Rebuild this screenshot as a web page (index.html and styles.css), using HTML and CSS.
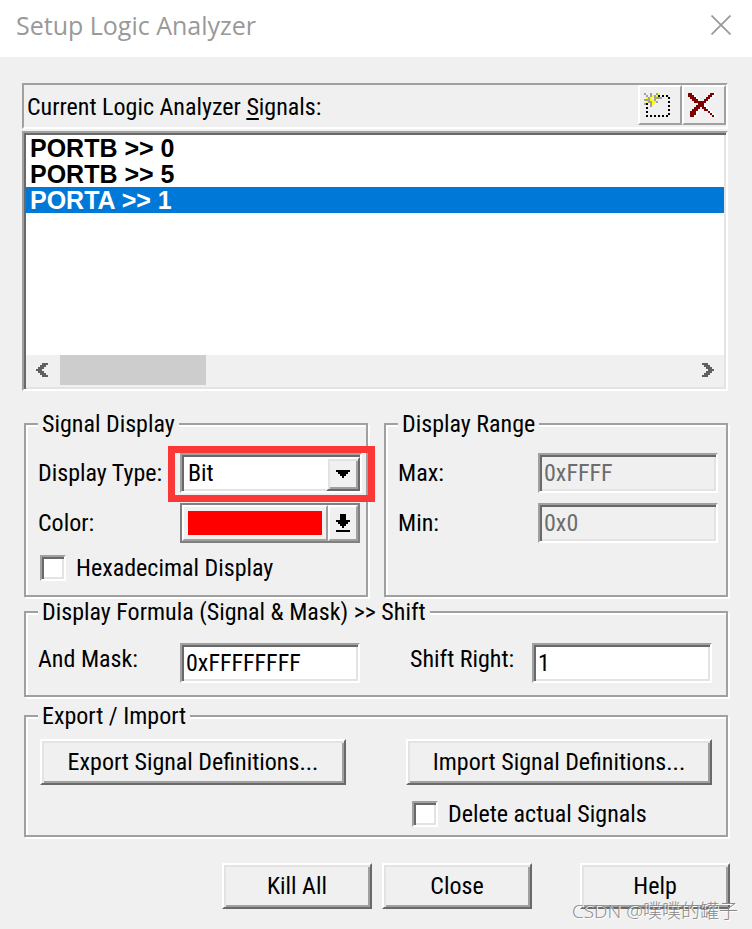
FILE: index.html
```html
<!DOCTYPE html>
<html lang="en">
<head>
<meta charset="utf-8">
<title>Setup Logic Analyzer</title>
<link rel="stylesheet" href="styles.css">
</head>
<body>
<main class="dialog">
  <header class="titlebar">
    <h1 class="title">Setup Logic Analyzer</h1>
    <button class="close" type="button" aria-label="Close window">
      <svg width="20" height="20" viewBox="0 0 20 20" fill="none" stroke="#999" stroke-width="1.7"><path d="M.5 .5 19.5 19.5M19.5 .5 .5 19.5"/></svg>
    </button>
  </header>

  <form class="content">
    <div class="caption">
      <span class="caption-text" id="signals-label">Current Logic Analyzer <u>S</u>ignals:</span>
      <button class="tool" type="button" aria-label="New signal">
        <svg width="26" height="24" viewBox="0 0 13 12" shape-rendering="crispEdges">
          <path fill="#000" d="M7 1h1v1H7zM9 1h1v1H9zM11 1h1v1h-1zM12 2h1v1h-1zM12 4h1v1h-1zM12 6h1v1h-1zM12 8h1v1h-1zM12 10h1v1h-1zM1 5h1v1H1zM1 7h1v1H1zM1 9h1v1H1zM1 11h1v1H1zM3 11h1v1H3zM5 11h1v1H5zM7 11h1v1H7zM9 11h1v1H9zM11 11h1v1h-1z"/>
          <path fill="#a0a0a0" d="M0 0h1v1H0zM3 0h1v2H3zM6 0h1v1H6zM1 1h1v1H1zM5 1h1v1H5zM2 2h1v1H2zM5 2h4v1H5zM0 3h3v1H0zM2 4h2v1H2zM6 4h1v1H6zM0 5h1v1H0zM3 5h1v2H3zM5 3h1v1H5z"/>
          <path fill="#ff0" d="M7 0h1v1H7zM4 1h1v1H4zM6 1h1v1H6zM1 2h1v1H1zM3 2h1v1H3zM3 3h2v1H3zM1 4h1v1H1zM4 4h2v1H4zM4 5h1v1H4z"/>
        </svg>
      </button>
      <button class="tool" type="button" aria-label="Delete signal">
        <svg width="28" height="26" viewBox="0 0 14 13" shape-rendering="crispEdges">
          <defs><path id="cross" d="M0 0h2v1H0zM11 0h2v1h-2zM0 1h3v1H0zM10 1h2v1h-2zM1 2h3v1H1zM9 2h2v1H9zM2 3h3v1H2zM8 3h2v1H8zM3 4h6v1H3zM5 5h3v1H5zM4 6h4v1H4zM3 7h3v1H3zM7 7h2v1H7zM2 8h3v1H2zM8 8h2v1H8zM1 9h3v1H1zM10 9h1v1h-1zM1 10h3v1H1zM11 10h1v1h-1zM1 11h2v1H1zM12 11h1v1h-1z"/></defs>
          <use href="#cross" x="1" fill="#fff"/>
          <use href="#cross" fill="#800000"/>
        </svg>
      </button>
    </div>

    <div class="signals sunken">
      <ul class="signal-list" role="listbox" aria-labelledby="signals-label">
        <li role="option" aria-selected="false">PORTB &gt;&gt; 0</li>
        <li role="option" aria-selected="false">PORTB &gt;&gt; 5</li>
        <li role="option" aria-selected="true" class="selected">PORTA &gt;&gt; 1</li>
      </ul>
      <div class="scrollbar">
        <button class="scroll-arrow" type="button" aria-label="Scroll left">
          <svg width="12" height="14" viewBox="0 0 6 7" fill="#606060" shape-rendering="crispEdges"><path d="M3 0h3v1H3zM2 1h3v1H2zM1 2h3v1H1zM0 3h3v1H0zM1 4h3v1H1zM2 5h3v1H2zM3 6h3v1H3z"/></svg>
        </button>
        <div class="scroll-track"><div class="scroll-thumb"></div></div>
        <button class="scroll-arrow" type="button" aria-label="Scroll right">
          <svg width="12" height="14" viewBox="0 0 6 7" fill="#606060" shape-rendering="crispEdges"><path d="M0 0h3v1H0zM1 1h3v1H1zM2 2h3v1H2zM3 3h3v1H3zM2 4h3v1H2zM1 5h3v1H1zM0 6h3v1H0z"/></svg>
        </button>
      </div>
    </div>

    <div class="groups">
      <div class="pair">
        <fieldset class="group display">
          <legend>Signal Display</legend>
          <div class="row">
            <label for="type">Display Type:</label>
            <div class="combo field">
              <select id="type" class="sunken"><option>Bit</option></select>
              <span class="combo-arrow raised">
                <svg width="14" height="8" viewBox="0 0 7 4" shape-rendering="crispEdges"><path d="M0 0h7v1H0zM1 1h5v1H1zM2 2h3v1H2zM3 3h1v1H3z"/></svg>
              </span>
              <span class="highlight"></span>
            </div>
          </div>
          <div class="row">
            <label for="color">Color:</label>
            <button id="color" class="color field" type="button">
              <span class="color-face"><span class="swatch"></span></span>
              <span class="color-drop">
                <svg width="14" height="18" viewBox="0 0 7 9" shape-rendering="crispEdges"><path d="M2 0h3v3H2zM0 3h7v1H0zM1 4h5v1H1zM2 5h3v1H2zM3 6h1v1H3zM0 8h7v1H0z"/></svg>
              </span>
            </button>
          </div>
          <label class="check"><input type="checkbox" class="sunken">Hexadecimal Display</label>
        </fieldset>

        <fieldset class="group range">
          <legend>Display Range</legend>
          <div class="row">
            <label for="max">Max:</label>
            <input id="max" class="text field sunken" type="text" value="0xFFFF" disabled>
          </div>
          <div class="row">
            <label for="min">Min:</label>
            <input id="min" class="text field sunken" type="text" value="0x0" disabled>
          </div>
        </fieldset>
      </div>

      <fieldset class="group formula">
        <legend>Display Formula (Signal &amp; Mask) &gt;&gt; Shift</legend>
        <div class="formula-row">
          <div class="row">
            <label for="mask">And Mask:</label>
            <input id="mask" class="text field sunken" type="text" value="0xFFFFFFFF">
          </div>
          <div class="row shift">
            <label for="shift">Shift Right:</label>
            <input id="shift" class="text field sunken" type="text" value="1">
          </div>
        </div>
      </fieldset>

      <fieldset class="group transfer">
        <legend>Export / Import</legend>
        <div class="transfer-grid">
          <button class="push raised" type="button">Export Signal Definitions...</button>
          <button class="push raised" type="button">Import Signal Definitions...</button>
          <label class="check delete"><input type="checkbox" class="sunken">Delete actual Signals</label>
        </div>
      </fieldset>
    </div>

    <footer class="actions">
      <button class="push raised" type="button">Kill All</button>
      <button class="push raised" type="button">Close</button>
      <button class="push raised help" type="button">Help</button>
    </footer>
  </form>
  <div class="watermark">CSDN @噗噗的罐子</div>
</main>
</body>
</html>
```
FILE: styles.css
```css
* {
  box-sizing: border-box;
}

body {
  margin: 0;
  background: #f0f0f0;
  color: #000;
  font: 24px/28px "Roboto Condensed", Roboto, sans-serif;
}

button, input, select {
  margin: 0;
  padding: 0;
  border: 0;
  border-radius: 0;
  background: #f0f0f0;
  color: inherit;
  font: inherit;
}

svg {
  display: block;
}

.dialog {
  position: relative;
  min-height: 100vh;
}

/* Two-step bevels */
.sunken {
  border: 2px solid;
  border-color: #a0a0a0 #fff #fff #a0a0a0;
  box-shadow: inset 2px 2px #696969, inset -2px -2px #e3e3e3;
}

.raised {
  border: 2px solid;
  border-color: #fff #696969 #696969 #fff;
  box-shadow: inset 2px 2px #e3e3e3, inset -2px -2px #a0a0a0;
}

.titlebar {
  display: flex;
  align-items: center;
  justify-content: space-between;
  height: 57px;
  padding: 0 21px 7px 16px;
  background: #fff;
}

.title {
  margin: 0;
  color: #999;
  font: 25px/34px "Open Sans", sans-serif;
}

.close {
  background: none;
}

.content {
  padding: 26px 24px 20px 22px;
}

/* Signal list */
.caption {
  display: flex;
  height: 46px;
  border: 2px solid;
  border-color: #a0a0a0 #fff #fff #a0a0a0;
}

.caption-text {
  flex: 1;
  padding: 8px 0 0 3px;
}

.caption u {
  text-underline-offset: 3px;
}

.tool {
  width: 44px;
  height: 40px;
  padding: 6px 4px;
  border: 2px solid;
  border-color: #fff #a0a0a0 #a0a0a0 #fff;
}

.signals {
  height: 260px;
  margin-top: 2px;
  padding: 2px;
  display: flex;
  flex-direction: column;
  background: #fff;
}

.signal-list {
  flex: 1;
  margin: 0;
  padding: 0;
  list-style: none;
  font: bold 25px/26px "Liberation Sans", sans-serif;
}

.signal-list li {
  padding-left: 4px;
}

.signal-list .selected {
  background: #0078d7;
  color: #fff;
}

.scrollbar {
  display: flex;
  gap: 2px;
  height: 32px;
  padding-bottom: 2px;
  background: #f0f0f0;
}

.scroll-arrow {
  display: grid;
  place-items: center;
  width: 32px;
}

.scroll-track {
  flex: 1;
}

.scroll-thumb {
  width: 146px;
  height: 30px;
  background: #cdcdcd;
}

/* Groups */
.groups {
  padding: 19px 0 0 2px;
}

.pair {
  display: grid;
  grid-template-columns: 1fr 1fr;
  gap: 16px;
}

.group {
  min-width: 0;
  margin: 0;
  border: 2px solid #a0a0a0;
  box-shadow: 2px 2px #fff, inset 2px 2px #fff;
}

.group legend {
  padding: 0 4px;
  background: #f0f0f0;
}

.display {
  padding: 15px 6px 14px 12px;
}

.range {
  padding: 15px 8px 14px 12px;
}

.formula {
  margin-top: 1px;
  padding: 17px 14px 12px 12px;
}

.transfer {
  margin-top: 5px;
  padding: 9px 14px 8px 12px;
}

.row {
  display: flex;
  align-items: center;
  height: 40px;
}

.row label {
  flex: none;
  width: 142px;
}

.range .row label {
  width: 140px;
}

.row + .row {
  margin-top: 10px;
}

.field {
  flex: 1;
  min-width: 0;
  height: 40px;
}

.text {
  padding: 0 4px;
  background: #fff;
}

.text:disabled {
  background: #f0f0f0;
  color: #6d6d6d;
}

.combo {
  position: relative;
  margin-right: -2px;
}

.combo select {
  width: 100%;
  height: 40px;
  padding: 0 36px 0 6px;
  appearance: none;
  background: #fff;
}

.combo-arrow {
  position: absolute;
  top: 4px;
  right: 2px;
  display: grid;
  place-items: center;
  width: 34px;
  height: 34px;
  background: #f0f0f0;
  pointer-events: none;
}

.highlight {
  position: absolute;
  inset: -7px -13px -9px -12px;
  border: 7px solid #fb3838;
  pointer-events: none;
}

.color {
  display: flex;
  border: 2px solid #808080;
}

.color-face, .color-drop {
  height: 36px;
  border: 2px solid;
  border-color: #fff #a0a0a0 #a0a0a0 #fff;
}

.color-face {
  flex: 1;
  padding: 4px;
}

.color-drop {
  display: grid;
  place-items: center;
  width: 30px;
}

.swatch {
  display: block;
  height: 24px;
  background: #f00;
}

.check {
  display: flex;
  align-items: center;
  gap: 10px;
  height: 26px;
  padding-left: 2px;
}

.check input {
  width: 26px;
  height: 26px;
  appearance: none;
  background: #fff;
}

.display .check {
  margin-top: 12px;
}

.formula-row {
  display: flex;
  justify-content: space-between;
}

.formula .row {
  margin: 0;
}

.formula .row label {
  padding-bottom: 8px;
}

.formula .shift label {
  width: 122px;
}

.formula .field {
  flex: none;
  width: 180px;
}

.transfer-grid {
  display: grid;
  grid-template-columns: 1fr 1fr;
  gap: 16px 60px;
  padding-left: 2px;
}

.delete {
  grid-column: 2;
  padding-left: 6px;
}

.push {
  height: 46px;
}

.actions {
  display: flex;
  justify-content: flex-end;
  gap: 10px;
  margin: 26px -2px 0 0;
}

.actions .push {
  width: 150px;
}

.actions .help {
  margin-left: 38px;
}

.watermark {
  position: absolute;
  right: 14px;
  bottom: 4px;
  color: #888;
  font: 19px/28px "Open Sans", "Noto Sans CJK SC", sans-serif;
  font-weight: 300;
  text-shadow: 1px 1px #fff;
}
```
